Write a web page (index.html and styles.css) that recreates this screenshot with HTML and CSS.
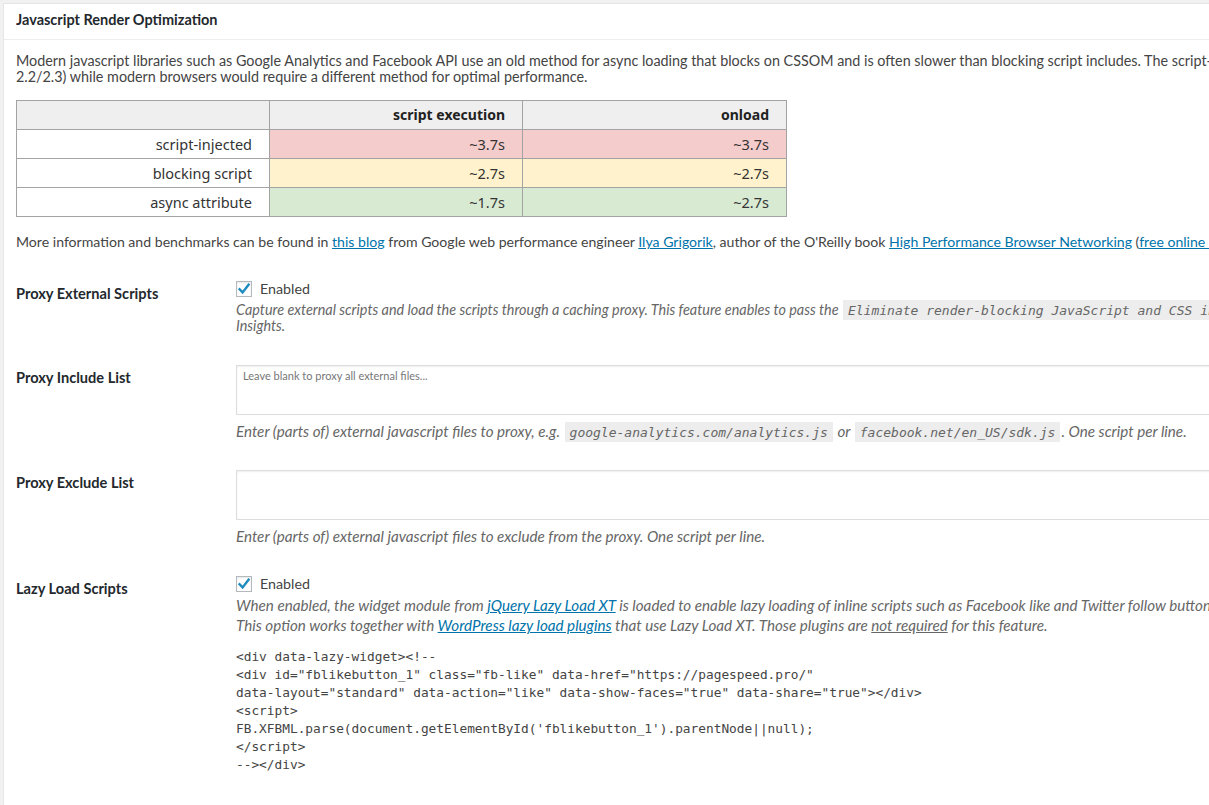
FILE: index.html
```html
<!DOCTYPE html>
<html lang="en">
<head>
<meta charset="utf-8">
<title>Javascript Render Optimization</title>
<link rel="stylesheet" href="styles.css">
</head>
<body>
<div class="panel">
  <h3 class="hdr">Javascript Render Optimization</h3>
  <div class="inside">
    <p class="intro">Modern javascript libraries such as Google Analytics and Facebook API use an old method for async loading that blocks on CSSOM and is often slower than blocking script includes. The script-injected method is used by Facebook SDK (v<br>2.2/2.3) while modern browsers would require a different method for optimal performance.</p>

    <table class="bench">
      <colgroup><col class="c1"><col class="c2"><col class="c3"></colgroup>
      <thead>
        <tr><th></th><th>script execution</th><th>onload</th></tr>
      </thead>
      <tbody>
        <tr class="bad"><td class="name">script-injected</td><td>~3.7s</td><td>~3.7s</td></tr>
        <tr class="mid"><td class="name">blocking script</td><td>~2.7s</td><td>~2.7s</td></tr>
        <tr class="good"><td class="name">async attribute</td><td>~1.7s</td><td>~2.7s</td></tr>
      </tbody>
    </table>

    <p class="more">More information and benchmarks can be found in <a href="#">this blog</a> from Google web performance engineer <a href="#">Ilya Grigorik</a>, author of the O'Reilly book <a href="#">High Performance Browser Networking</a> (<a href="#">free online book</a>).</p>

    <div class="form">
      <div class="row">
        <div class="label">Proxy External Scripts</div>
        <div class="field">
          <label class="check"><span class="box"><svg viewBox="0 0 16 16" width="16" height="16"><path d="M3.6 8.2 L6.6 11.4 L12.6 3.6" fill="none" stroke="#1e8cbe" stroke-width="2.4" stroke-linecap="square"/></svg></span>Enabled</label>
          <p class="desc d16">Capture external scripts and load the scripts through a caching proxy. This feature enables to pass the <code>Eliminate render-blocking JavaScript and CSS in above-the-fold content</code> rule in Google PageSpeed<br>Insights.</p>
        </div>
      </div>

      <div class="row">
        <div class="label">Proxy Include List</div>
        <div class="field">
          <textarea class="ta" placeholder="Leave blank to proxy all external files..."></textarea>
          <p class="desc dta">Enter (parts of) external javascript files to proxy, e.g. <code>google-analytics.com/analytics.js</code> or <code>facebook.net/en_US/sdk.js</code>. One script per line.</p>
        </div>
      </div>

      <div class="row">
        <div class="label">Proxy Exclude List</div>
        <div class="field">
          <textarea class="ta"></textarea>
          <p class="desc dta">Enter (parts of) external javascript files to exclude from the proxy. One script per line.</p>
        </div>
      </div>

      <div class="row row-last">
        <div class="label">Lazy Load Scripts</div>
        <div class="field">
          <label class="check"><span class="box"><svg viewBox="0 0 16 16" width="16" height="16"><path d="M3.6 8.2 L6.6 11.4 L12.6 3.6" fill="none" stroke="#1e8cbe" stroke-width="2.4" stroke-linecap="square"/></svg></span>Enabled</label>
          <p class="desc d20">When enabled, the widget module from <a href="#">jQuery Lazy Load XT</a> is loaded to enable lazy loading of inline scripts such as Facebook like and Twitter follow buttons.<br>This option works together with <a href="#">WordPress lazy load plugins</a> that use Lazy Load XT. Those plugins are <u>not required</u> for this feature.</p>
          <pre class="code">&lt;div data-lazy-widget&gt;&lt;!--
&lt;div id="fblikebutton_1" class="fb-like" data-href="https://pagespeed.pro/"
data-layout="standard" data-action="like" data-show-faces="true" data-share="true"&gt;&lt;/div&gt;
&lt;script&gt;
FB.XFBML.parse(document.getElementById('fblikebutton_1').parentNode||null);
&lt;/script&gt;
--&gt;&lt;/div&gt;</pre>
        </div>
      </div>
    </div>
  </div>
</div>
</body>
</html>
```

FILE: styles.css
```css
html, body {
  margin: 0;
  padding: 0;
}

body {
  background: #f1f1f1;
  font-family: Lato, "Open Sans", sans-serif;
  font-size: 14.25px;
  color: #444;
  width: 1209px;
  height: 805px;
  overflow: hidden;
}

.panel {
  margin: 3px 0 0 3px;
  width: 1400px;
  min-height: 900px;
  background: #fff;
  border: 1px solid #e5e5e5;
}

.hdr {
  margin: 0;
  padding: 0 12px 3px;
  line-height: 32px;
  font-size: 14.5px;
  font-weight: 700;
  color: #23282d;
  border-bottom: 1px solid #eee;
}

.inside {
  padding: 0 12px;
}

.intro {
  margin: 13px 0 0;
  line-height: 16px;
  white-space: nowrap;
  font-size: 14.35px;
}

a {
  color: #0073aa;
  text-decoration: underline;
}

.bench {
  margin-top: 15px;
  border-collapse: collapse;
  table-layout: fixed;
  width: 770px;
  font-family: "Noto Sans", "Open Sans", sans-serif;
  font-size: 14.5px;
  color: #333;
}

.bench .c1 { width: 253px; }
.bench .c2 { width: 253px; }
.bench .c3 { width: 264px; }

.bench th,
.bench td {
  border: 1px solid #a3a3a3;
  padding: 0 17px 0 0;
  height: 28px;
  line-height: 28px;
  text-align: right;
  box-sizing: border-box;
}

.bench th {
  background: #efefef;
  font-size: 14px;
  font-weight: 700;
  color: #222;
}

.bench td.name { background: #fff; }
.bad td { background: #f4cccc; }
.mid td { background: #fff2cc; }
.good td { background: #d9ead3; }

.more {
  margin: 17px 0 0;
  line-height: 16px;
  white-space: nowrap;
  font-size: 14.1px;
}

.form {
  margin-top: 31px;
  display: flex;
  flex-direction: column;
  gap: 31px;
}

.row {
  display: grid;
  grid-template-columns: 220px 1fr;
}

.row-last {
  margin-top: 1px;
}

.label {
  font-weight: 700;
  font-size: 14.6px;
  color: #23282d;
  line-height: 20px;
  padding-top: 3px;
}

.field {
  min-width: 0;
}

.check {
  display: flex;
  align-items: center;
  height: 16px;
  line-height: 16px;
  color: #444;
}

.box {
  width: 16px;
  height: 16px;
  box-sizing: border-box;
  border: 1px solid #b4b9be;
  background: #fff;
  box-shadow: inset 0 1px 2px rgba(0, 0, 0, 0.1);
  margin-right: 8px;
  position: relative;
  flex: none;
}

.box svg {
  position: absolute;
  left: -1px;
  top: -1px;
}

.desc {
  margin: 0;
  font-style: italic;
  color: #666;
  white-space: nowrap;
  font-size: 15.2px;
}

.d16 { margin-top: 5px; line-height: 16px; font-size: 14.4px; }
.d20 { margin-top: 3px; line-height: 20px; }
.dta { margin-top: 8px; line-height: 16px; }

.desc u { color: #666; }

.desc code {
  font-family: "DejaVu Sans Mono", monospace;
  font-size: 13px;
  line-height: 0;
  font-style: italic;
  background: #ededed;
  color: #666;
  padding: 3px 5px 2px;
  margin: 0 1px;
}

.ta {
  display: block;
  width: 100%;
  height: 50px;
  box-sizing: border-box;
  border: 1px solid #ddd;
  box-shadow: inset 0 1px 2px rgba(0, 0, 0, 0.07);
  padding: 4px 6px;
  font-family: Lato, sans-serif;
  font-size: 11px;
  line-height: 12px;
  resize: none;
  background: #fff;
  margin: 0;
}

.ta::placeholder {
  color: #777;
}

.code {
  margin: 13px 0 0;
  font-family: "DejaVu Sans Mono", monospace;
  font-size: 12.8px;
  line-height: 18px;
  color: #444;
}
```
